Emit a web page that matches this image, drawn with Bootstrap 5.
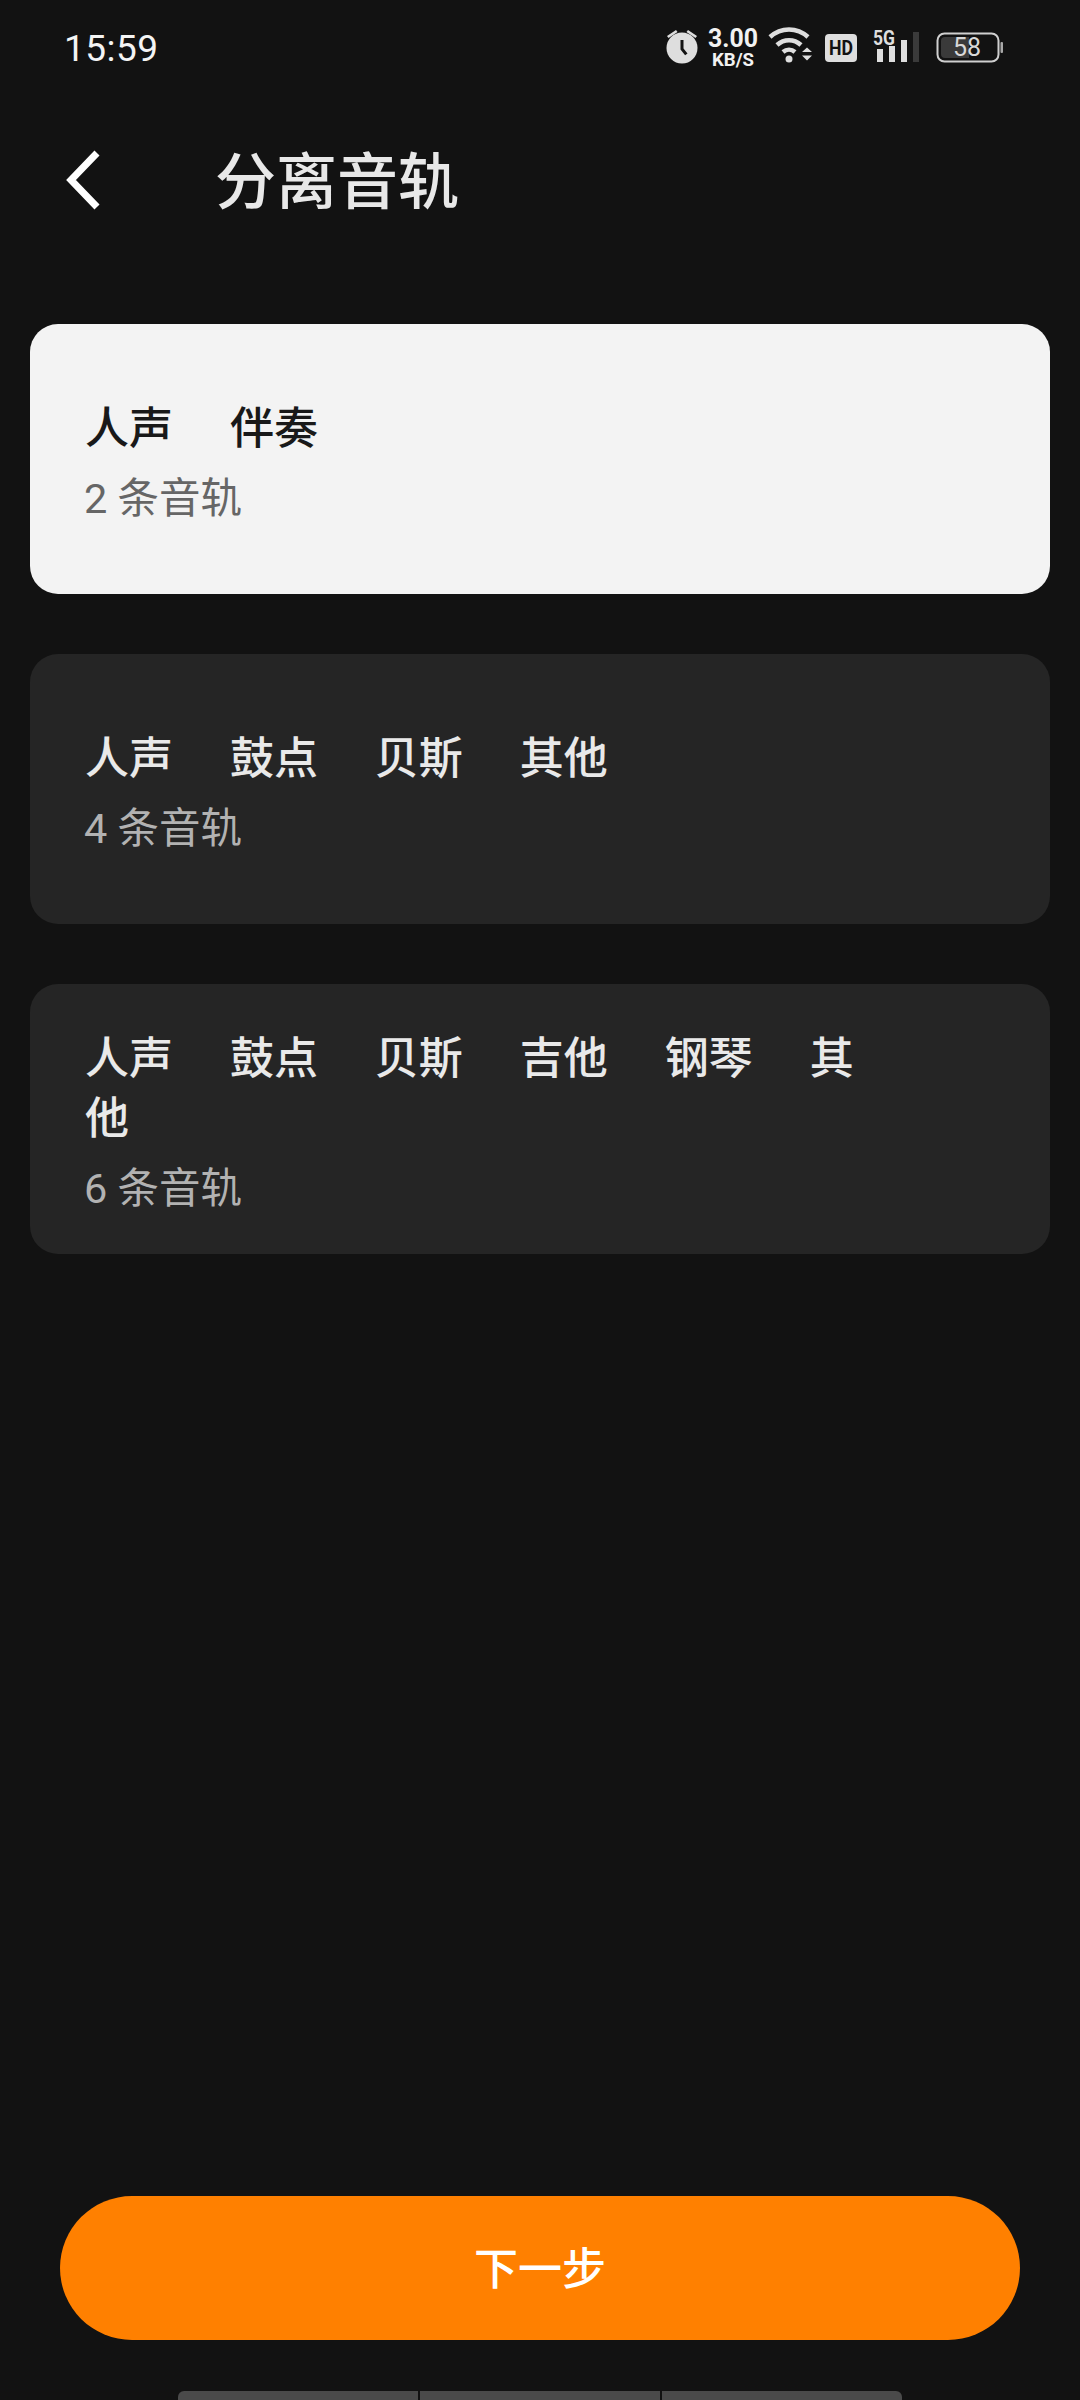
<!DOCTYPE html>
<html lang="zh-CN">
<head>
  <meta charset="UTF-8" />
  <meta name="viewport" content="width=device-width, initial-scale=1.0" />
  <title>分离音轨</title>
  <link href="https://cdn.jsdelivr.net/npm/bootstrap@5.3.0/dist/css/bootstrap.min.css" rel="stylesheet">
  <style>
    body {
      background: #121212;
      font-family: Roboto, "Noto Sans CJK SC", sans-serif;
    }
    .screen { width: 1080px; height: 2400px; overflow: hidden; }
    .status-row { height: 94px; padding: 2px 76px 0 64px; }
    .clock { font-size: 37px; color: #f4f4f4; letter-spacing: .5px; line-height: 1; }
    .status-icons svg { display: block; }
    .status-icons text { font-family: Roboto, sans-serif; }
    .top-row { height: 178px; padding-left: 66px; }
    .page-name { font-size: 61px; font-weight: 500; color: #e8e8e8; margin: 0 0 0 114px; line-height: 1; }
    .track-list { padding: 52px 30px 0; gap: 60px; }
    .mode-card {
      height: 270px; border: 0; border-radius: 28px; background: #252525;
      padding: 8px 56px 0 55px; justify-content: center;
    }
    .mode-names {
      font-size: 44px; font-weight: 500; line-height: 60px; color: #e9e9e9;
      word-spacing: 46px; max-width: 790px;
    }
    .mode-count { font-size: 41.5px; line-height: 56px; margin: 12px 0 0 -1px; color: #b2b2b2; }
    .mode-card.active { background: #f3f3f3; }
    .mode-card.active .mode-names { color: #191919; }
    .mode-card.active .mode-count { color: #666; }
    .next-btn {
      width: 960px; height: 144px; margin: auto auto 0; border: 0; border-radius: 72px;
      background: #ff8000; color: #fff; font-size: 44px; font-weight: 500; padding-top: 10px;
    }
    .home-bar { width: 724px; height: 9px; margin: 51px auto 0; gap: 2px; }
    .home-bar span { background: #4a4a4a; flex: 1 1 0; }
    .home-bar span:first-child { border-radius: 6px 0 0 0; }
    .home-bar span:last-child { border-radius: 0 6px 0 0; }
  </style>
</head>
<body>
  <div class="screen d-flex flex-column">
    <div class="status-row d-flex align-items-center justify-content-between">
      <span class="clock">15:59</span>
      <div class="status-icons d-flex align-items-center">
        <!-- alarm, speed, wifi, hd, 5g, battery all share one strip -->
        <svg width="340" height="50" viewBox="664 24 340 50" fill="#dedede">
          <circle cx="682" cy="49" r="15.5"/>
          <path d="M667 37l9-6 1.5 2-9 6zM697 37l-9-6-1.5 2 9 6z"/>
          <path d="M680.5 41h3v8.5l4 5-2.4 1.8-4.6-5.8z" fill="#121212"/>
          <text x="733" y="48" text-anchor="middle" font-size="25" font-weight="700" fill="#f2f2f2" textLength="50" lengthAdjust="spacingAndGlyphs">3.00</text>
          <text x="733" y="67" text-anchor="middle" font-size="18" font-weight="700" fill="#f2f2f2" textLength="42" lengthAdjust="spacingAndGlyphs">KB/S</text>
          <path d="M770 38c11-10 27-10 38 0" fill="none" stroke="#dedede" stroke-width="4.5"/>
          <path d="M777 46c7-6.500 17-6.500 24 0" fill="none" stroke="#dedede" stroke-width="4.500"/>
          <path d="M783 53c3.500-3 8.500-3 12 0" fill="none" stroke="#dedede" stroke-width="4.500"/>
          <circle cx="789" cy="60" r="3.500"/>
          <path d="M802 53l5-4.500 5 4.500zM802 56.500h10l-5 5z"/>
          <rect x="825" y="35" width="32" height="28" rx="4"/>
          <text x="841" y="56" text-anchor="middle" font-size="21" font-weight="700" fill="#121212" textLength="24" lengthAdjust="spacingAndGlyphs">HD</text>
          <text x="884" y="46" text-anchor="middle" font-size="20" font-weight="700" textLength="22" lengthAdjust="spacingAndGlyphs">5G</text>
          <rect x="877" y="50" width="6" height="13"/>
          <rect x="889" y="47" width="6" height="16"/>
          <rect x="901" y="41" width="6" height="22"/>
          <rect x="913" y="33" width="6" height="30" fill="#3a3a3a"/>
          <rect x="937.500" y="34.500" width="61" height="28" rx="7" fill="none" stroke="#cfcfcf" stroke-width="2"/>
          <path d="M941 42a4 4 0 0 1 4-4h24v21h-24a4 4 0 0 1-4-4z" fill="#3a3a3a"/>
          <rect x="1000.500" y="43" width="2.500" height="11" rx="1" fill="#a8a8a8"/>
          <text x="967" y="57" text-anchor="middle" font-size="25" fill="#d8d8d8">58</text>
        </svg>
      </div>
    </div>

    <div class="top-row d-flex align-items-center">
      <svg width="35" height="66" viewBox="0 0 35 66"><path d="M31 3L5 30l26 27" fill="none" stroke="#fff" stroke-width="7"/></svg>
      <h1 class="page-name">分离音轨</h1>
    </div>

    <div class="track-list d-flex flex-column">
      <div class="card mode-card active">
        <div class="mode-names">人声 伴奏</div>
        <div class="mode-count">2 条音轨</div>
      </div>
      <div class="card mode-card">
        <div class="mode-names">人声 鼓点 贝斯 其他</div>
        <div class="mode-count">4 条音轨</div>
      </div>
      <div class="card mode-card">
        <div class="mode-names">人声 鼓点 贝斯 吉他 钢琴 其他</div>
        <div class="mode-count">6 条音轨</div>
      </div>
    </div>

    <button type="button" class="btn next-btn">下一步</button>
    <div class="home-bar d-flex"><span></span><span></span><span></span></div>
  </div>
  <script src="https://cdn.jsdelivr.net/npm/bootstrap@5.3.0/dist/js/bootstrap.bundle.min.js"></script>
</body>
</html>
